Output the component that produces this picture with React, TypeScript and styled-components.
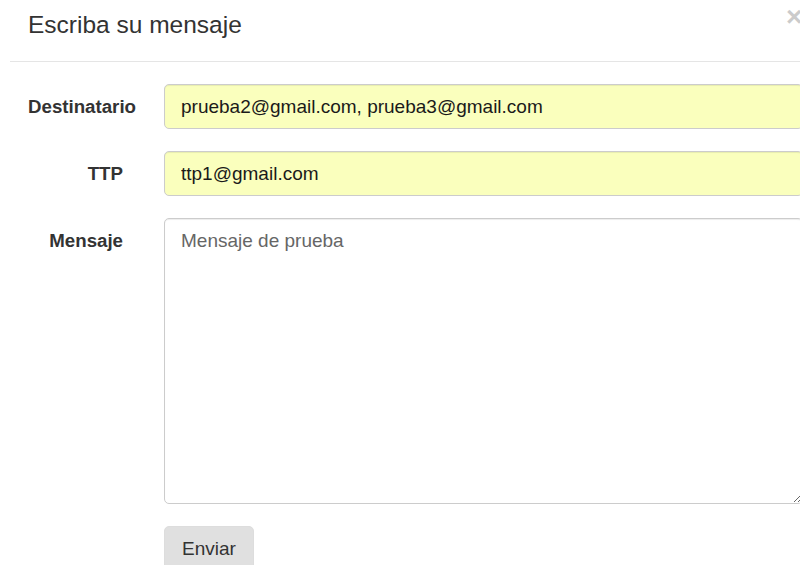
import styled, { createGlobalStyle } from 'styled-components';

const GlobalStyle = createGlobalStyle`
  body {
    margin: 0;
    background: #fff;
    overflow: hidden;
    font-family: 'Liberation Sans', Arial, sans-serif;
    color: #333;
  }
`;

const Modal = styled.div`
  width: 830px;
  margin-left: 10px;
`;

const Header = styled.div`
  position: relative;
  height: 61px;
  padding: 0 18px;
  border-bottom: 1px solid #e5e5e5;
  display: flex;
  align-items: center;
`;

const Title = styled.h4`
  margin: 0;
  margin-top: -11px;
  font-size: 24.5px;
  font-weight: normal;
  color: #333;
`;

const Close = styled.button`
  position: absolute;
  top: 3px;
  left: 776px;
  padding: 0;
  border: none;
  background: none;
  font-family: 'Liberation Sans', Arial, sans-serif;
  font-size: 28px;
  font-weight: bold;
  line-height: 1;
  color: #000;
  opacity: 0.2;
  cursor: pointer;
`;

const Form = styled.form`
  padding-top: 22px;
  display: flex;
  flex-direction: column;
  gap: 22px;
`;

const Row = styled.div`
  display: grid;
  grid-template-columns: 95px 639px;
  column-gap: 41px;
  padding-left: 18px;
  align-items: start;
`;

const Label = styled.label`
  text-align: right;
  white-space: nowrap;
  font-size: 18.7px;
  font-weight: bold;
  color: #333;
  padding-top: 12px;
`;

const Input = styled.input`
  box-sizing: border-box;
  width: 100%;
  height: 45px;
  padding: 0 16px;
  border: 1px solid #ccc;
  border-radius: 5px;
  background: #faffbd;
  font-family: 'Liberation Sans', Arial, sans-serif;
  font-size: 19px;
  color: #1a1a1a;
  box-shadow: inset 0 1px 1px rgba(0, 0, 0, 0.075);
  outline: none;
`;

const TextArea = styled.textarea`
  box-sizing: border-box;
  width: 100%;
  height: 286px;
  padding: 10px 16px;
  border: 1px solid #ccc;
  border-radius: 5px;
  background: #fff;
  font-family: 'Liberation Sans', Arial, sans-serif;
  font-size: 19px;
  line-height: 1.3;
  color: #666;
  box-shadow: inset 0 1px 1px rgba(0, 0, 0, 0.075);
  outline: none;
  resize: vertical;
`;

const Actions = styled.div`
  padding-left: 154px;
`;

const Button = styled.button`
  height: 45px;
  padding: 0 17px;
  border: 1px solid #ddd;
  border-radius: 5px;
  background: #e0e0e0;
  font-family: 'Liberation Sans', Arial, sans-serif;
  font-size: 19px;
  color: #333;
  cursor: pointer;
`;

const App = () => {
  return (
    <>
      <GlobalStyle />
      <Modal>
        <Header>
          <Title>Escriba su mensaje</Title>
          <Close type='button'>×</Close>
        </Header>
        <Form onSubmit={e => e.preventDefault()}>
          <Row>
            <Label htmlFor='dest'>Destinatario</Label>
            <Input id='dest' type='text' defaultValue='prueba2@gmail.com, prueba3@gmail.com' />
          </Row>
          <Row>
            <Label htmlFor='ttp'>TTP</Label>
            <Input id='ttp' type='text' defaultValue='ttp1@gmail.com' />
          </Row>
          <Row>
            <Label htmlFor='msg'>Mensaje</Label>
            <TextArea id='msg' defaultValue='Mensaje de prueba' />
          </Row>
          <Actions>
            <Button type='submit'>Enviar</Button>
          </Actions>
        </Form>
      </Modal>
    </>
  );
};

export default App;
